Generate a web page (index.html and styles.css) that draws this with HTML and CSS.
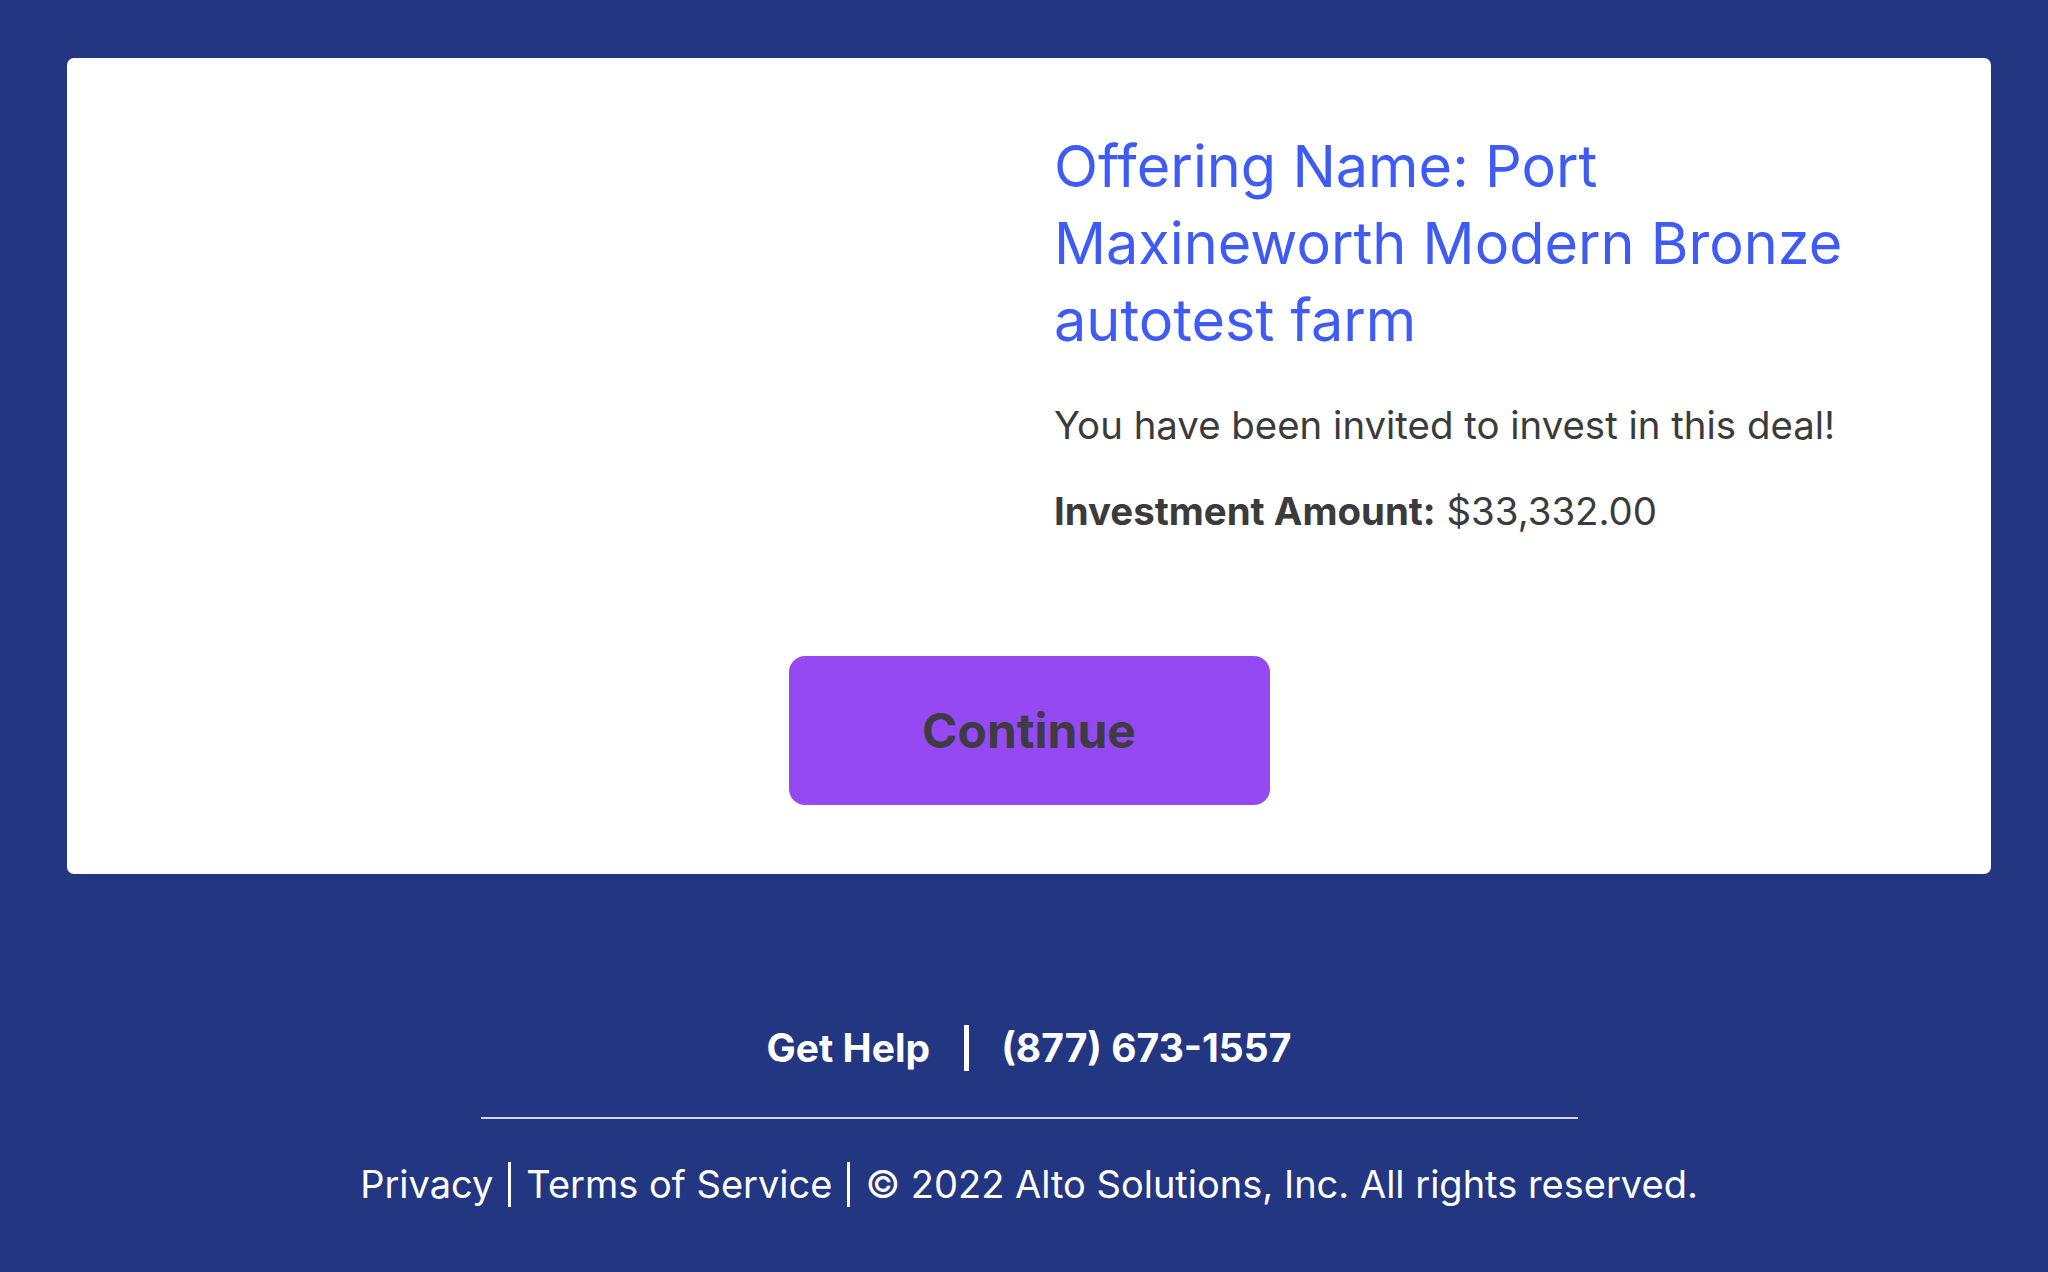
FILE: index.html
```html
<!DOCTYPE html>
<html lang="en">
<head>
<meta charset="utf-8">
<title>Offering Invitation</title>
<link rel="stylesheet" href="styles.css">
</head>
<body>
<main class="page">
  <section class="card">
    <div class="card-top">
      <div class="media"></div>
      <div class="info">
        <h1 class="title">Offering Name: Port Maxineworth Modern Bronze autotest farm</h1>
        <p class="invite">You have been invited to invest in this deal!</p>
        <p class="amount"><strong>Investment Amount:</strong> $33,332.00</p>
      </div>
    </div>
    <div class="actions">
      <button class="continue" type="button">Continue</button>
    </div>
  </section>
  <footer class="footer">
    <div class="help"><span>Get Help</span><span class="help-bar"></span><span>(877) 673-1557</span></div>
    <hr class="rule">
    <div class="legal"><span>Privacy</span><span class="legal-bar"></span><span>Terms of Service</span><span class="legal-bar"></span><span>© 2022 Alto Solutions, Inc. All rights reserved.</span></div>
  </footer>
</main>
</body>
</html>
```

FILE: styles.css
```css
html, body {
  margin: 0;
  padding: 0;
}
body {
  background: #233681;
  font-family: Inter, "Noto Sans", sans-serif;
  min-height: 1272px;
}
.page {
  padding: 58px 57px 0 67px;
}
.card {
  background: #ffffff;
  border-radius: 7px;
  height: 816px;
  box-sizing: border-box;
}
.card-top {
  display: grid;
  grid-template-columns: 962px 1fr;
}
.info {
  padding: 70px 0 0 25px;
}
.title {
  margin: 0;
  max-width: 860px;
  font-size: 57.6px;
  line-height: 77px;
  font-weight: 400;
  color: #3f5bf5;
}
.invite {
  margin: 39px 0 0;
  font-size: 38.4px;
  line-height: 54px;
  color: #3b3b3b;
}
.amount {
  margin: 32px 0 0;
  font-size: 38.4px;
  line-height: 54px;
  color: #3b3b3b;
}
.amount strong {
  font-weight: 700;
}
.actions {
  display: flex;
  justify-content: center;
  padding-top: 118px;
}
.continue {
  width: 481px;
  height: 149px;
  border: 0;
  border-radius: 16px;
  background: #9449f2;
  color: #3f3b42;
  font-family: Inter, "Noto Sans", sans-serif;
  font-size: 48px;
  font-weight: 700;
  padding: 0;
}
.footer {
  padding-top: 150px;
  color: #ffffff;
  text-align: center;
}
.help {
  display: flex;
  justify-content: center;
  align-items: center;
  font-size: 39px;
  line-height: 48px;
  font-weight: 700;
}
.help-bar {
  display: inline-block;
  width: 5px;
  height: 46px;
  background: #ffffff;
  margin: 0 32px 0 34px;
}
.rule {
  width: 1097px;
  margin: 45px auto 0;
  border: 0;
  height: 2px;
  background: #d4d6e0;
}
.legal {
  margin-top: 38px;
  display: flex;
  justify-content: center;
  align-items: center;
  font-size: 38px;
  line-height: 54px;
}
.legal-bar {
  display: inline-block;
  width: 3px;
  height: 45px;
  background: #ffffff;
  margin: 0 15px;
}
```
